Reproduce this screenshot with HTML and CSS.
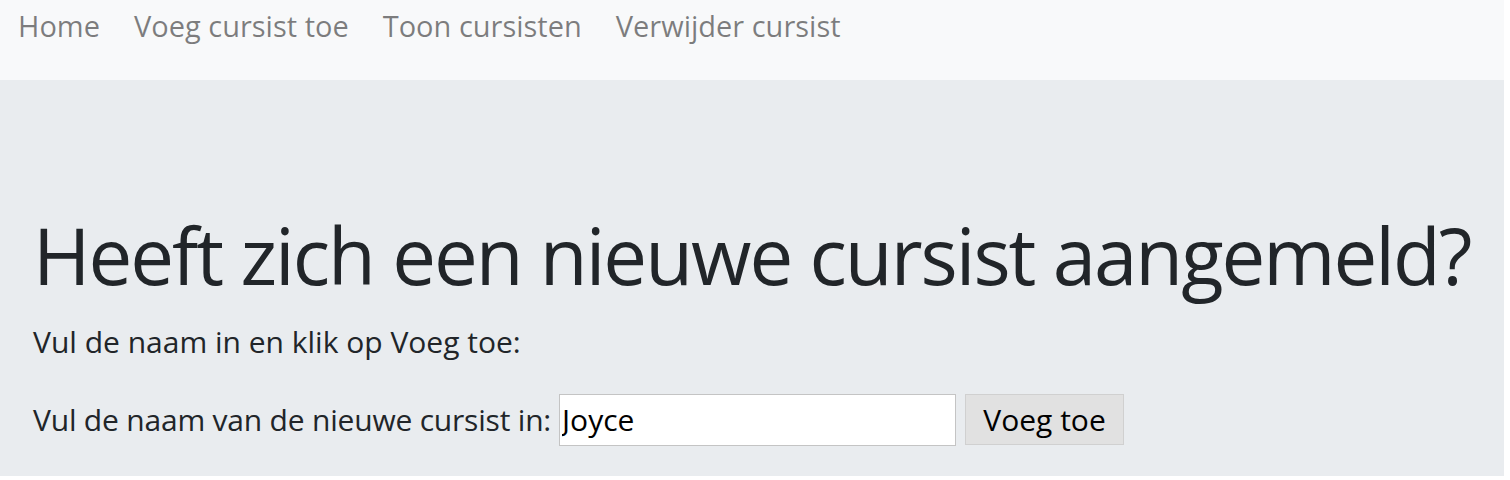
FILE: index.html
```html
<!DOCTYPE html>
<html lang="nl">
<head>
<meta charset="utf-8">
<title>Voeg cursist toe</title>
<link rel="stylesheet" href="styles.css">
</head>
<body>
<div class="page">
  <nav class="navbar">
    <a class="nav-link" href="#">Home</a>
    <a class="nav-link" href="#">Voeg cursist toe</a>
    <a class="nav-link" href="#">Toon cursisten</a>
    <a class="nav-link" href="#">Verwijder cursist</a>
  </nav>
  <main class="jumbotron">
    <h1 class="display">Heeft zich een nieuwe cursist aangemeld?</h1>
    <p class="lead">Vul de naam in en klik op Voeg toe:</p>
    <form class="add-form">
      <label class="form-label" for="naam">Vul de naam van de nieuwe cursist in:</label>
      <input class="form-input" id="naam" type="text" value="Joyce">
      <button class="form-button" type="button">Voeg toe</button>
    </form>
  </main>
</div>
</body>
</html>
```
FILE: styles.css
```css
html, body {
  margin: 0;
  padding: 0;
  background: #ffffff;
}
body {
  font-family: "Open Sans", "Noto Sans", sans-serif;
  color: #212529;
}
.page {
  width: 1504px;
}
.navbar {
  display: flex;
  align-items: flex-start;
  gap: 34px;
  height: 80px;
  box-sizing: border-box;
  padding: 4px 0 0 18px;
  background: #f8f9fa;
}
.nav-link {
  font-size: 29px;
  line-height: 1.5;
  color: rgba(0, 0, 0, 0.5);
  text-decoration: none;
}
.jumbotron {
  background: #e9ecef;
  padding: 129px 0 30px 33px;
}
.display {
  margin: 0;
  font-size: 78px;
  font-weight: 400;
  line-height: 1.2;
  letter-spacing: -2px;
  white-space: nowrap;
}
.lead {
  margin: 16px 0 0;
  font-size: 30px;
  line-height: 1.5;
}
.add-form {
  display: flex;
  align-items: center;
  gap: 8px;
  margin-top: 30px;
}
.form-label {
  font-size: 30px;
  line-height: 1.5;
  letter-spacing: -0.2px;
}
.form-input {
  box-sizing: border-box;
  width: 397px;
  height: 52px;
  margin: 0;
  padding: 0 2px;
  border: 1px solid #c4c4c4;
  background: #ffffff;
  font-family: inherit;
  font-size: 30px;
  color: #000000;
}
.form-button {
  box-sizing: border-box;
  width: 159px;
  height: 51px;
  margin: 0 0 0 1px;
  padding: 0;
  border: 1px solid #d0d0d0;
  background: #e1e1e1;
  font-family: inherit;
  font-size: 30px;
  color: #000000;
}
```
